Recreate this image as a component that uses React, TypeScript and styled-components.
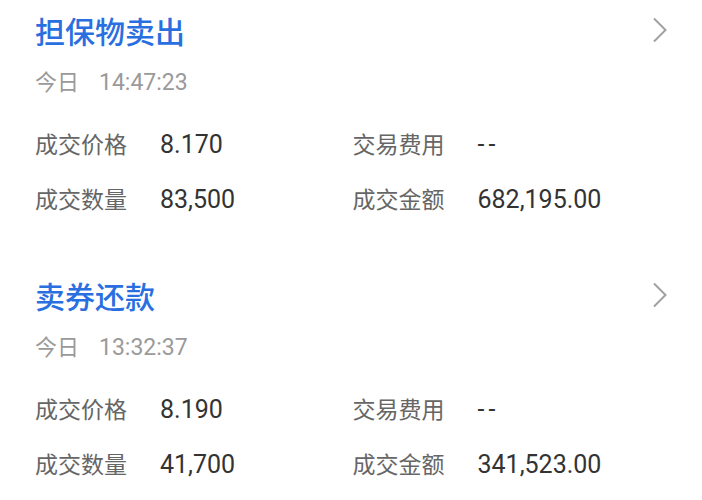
import React from 'react';
import styled, { createGlobalStyle } from 'styled-components';

const GlobalStyle = createGlobalStyle`
  body {
    margin: 0;
    background: #ffffff;
    font-family: "Noto Sans CJK SC", "Noto Sans", sans-serif;
  }
`;

const List = styled.div`
  display: flex;
  flex-direction: column;
  gap: 60px;
  padding-top: 10px;
`;

const Card = styled.div`
  padding: 0 32px 0 35px;
`;

const Header = styled.div`
  display: flex;
  align-items: center;
  justify-content: space-between;
  height: 40px;
`;

const Title = styled.div`
  font-size: 30px;
  font-weight: 500;
  color: #2a6fdf;
  line-height: 40px;
`;

const Chevron = styled.svg`
  width: 16px;
  height: 26px;
  margin-right: 2px;
  flex-shrink: 0;
`;

const DateLine = styled.div`
  display: flex;
  align-items: baseline;
  gap: 20px;
  margin-top: 15px;
  font-size: 22px;
  line-height: 30px;
  color: #9a9a9a;
`;

const Time = styled.span`
  font-family: Roboto, "Noto Sans CJK SC", sans-serif;
  font-size: 23px;
`;

const Grid = styled.div`
  display: grid;
  grid-template-columns: 1fr 1fr;
  row-gap: 23px;
  margin-top: 30px;
`;

const Field = styled.div`
  display: flex;
  align-items: baseline;
  line-height: 30px;
`;

const Label = styled.span`
  width: 125px;
  flex-shrink: 0;
  font-size: 23px;
  color: #666666;
`;

const Value = styled.span<{ $empty?: boolean }>`
  font-family: Roboto, "Noto Sans CJK SC", sans-serif;
  font-size: 25px;
  color: #333333;
  letter-spacing: ${({ $empty }) => ($empty ? '4px' : 'normal')};
`;

type Trade = {
  title: string;
  time: string;
  price: string;
  fee: string;
  qty: string;
  amount: string;
};

const trades: Trade[] = [
  { title: '担保物卖出', time: '14:47:23', price: '8.170', fee: '--', qty: '83,500', amount: '682,195.00' },
  { title: '卖券还款', time: '13:32:37', price: '8.190', fee: '--', qty: '41,700', amount: '341,523.00' },
];

const TradeCard: React.FC<{ trade: Trade }> = ({ trade }) => (
  <Card>
    <Header>
      <Title>{trade.title}</Title>
      <Chevron viewBox="0 0 16 26">
        <polyline points="2,1.5 13.5,13 2,24.5" fill="none" stroke="#a0a0a0" strokeWidth="2" />
      </Chevron>
    </Header>
    <DateLine>
      <span>今日</span>
      <Time>{trade.time}</Time>
    </DateLine>
    <Grid>
      <Field>
        <Label>成交价格</Label>
        <Value>{trade.price}</Value>
      </Field>
      <Field>
        <Label>交易费用</Label>
        <Value $empty={trade.fee === '--'}>{trade.fee}</Value>
      </Field>
      <Field>
        <Label>成交数量</Label>
        <Value>{trade.qty}</Value>
      </Field>
      <Field>
        <Label>成交金额</Label>
        <Value>{trade.amount}</Value>
      </Field>
    </Grid>
  </Card>
);

export default function App() {
  return (
    <>
      <GlobalStyle />
      <List>
        {trades.map(t => (
          <TradeCard key={t.time} trade={t} />
        ))}
      </List>
    </>
  );
}
